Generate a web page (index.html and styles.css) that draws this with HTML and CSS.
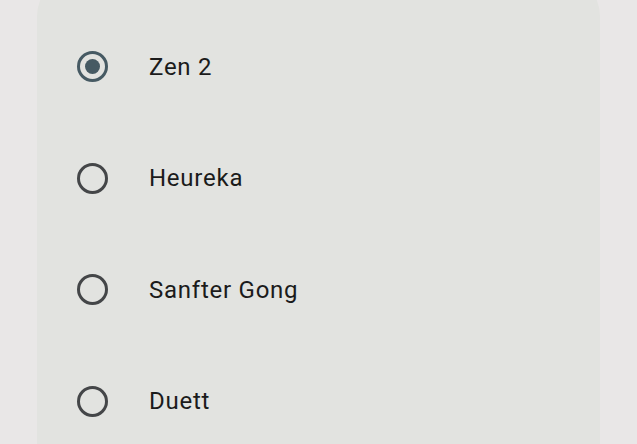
FILE: index.html
```html
<!DOCTYPE html>
<html>
<head>
<meta charset="utf-8">
<link rel="stylesheet" href="styles.css">
</head>
<body>
<div class="card">
  <div class="row"><span class="radio checked"></span><span class="label">Zen 2</span></div>
  <div class="row"><span class="radio"></span><span class="label">Heureka</span></div>
  <div class="row"><span class="radio"></span><span class="label">Sanfter Gong</span></div>
  <div class="row"><span class="radio"></span><span class="label">Duett</span></div>
</div>
</body>
</html>
```

FILE: styles.css
```css
html, body {
  margin: 0;
  padding: 0;
  background: #e9e7e7;
  width: 637px;
  height: 444px;
  overflow: hidden;
}
body {
  font-family: Roboto, "Noto Sans", sans-serif;
}
.card {
  margin: -24px 0 0 37px;
  width: 563px;
  height: 468px;
  background: #e2e3e0;
  border-radius: 40px 40px 0 0;
  padding-top: 35px;
  box-sizing: border-box;
}
.row {
  height: 111.5px;
  display: flex;
  align-items: center;
  padding-left: 40px;
}
.radio {
  width: 31px;
  height: 31px;
  box-sizing: border-box;
  border: 3px solid #444648;
  border-radius: 50%;
  display: flex;
  align-items: center;
  justify-content: center;
  flex: none;
}
.radio.checked {
  border-color: #465a63;
}
.radio.checked::after {
  content: "";
  width: 15px;
  height: 15px;
  border-radius: 50%;
  background: #465a63;
}
.label {
  margin-left: 41px;
  font-size: 24px;
  letter-spacing: 0.75px;
  color: #1b1b1b;
}
```
